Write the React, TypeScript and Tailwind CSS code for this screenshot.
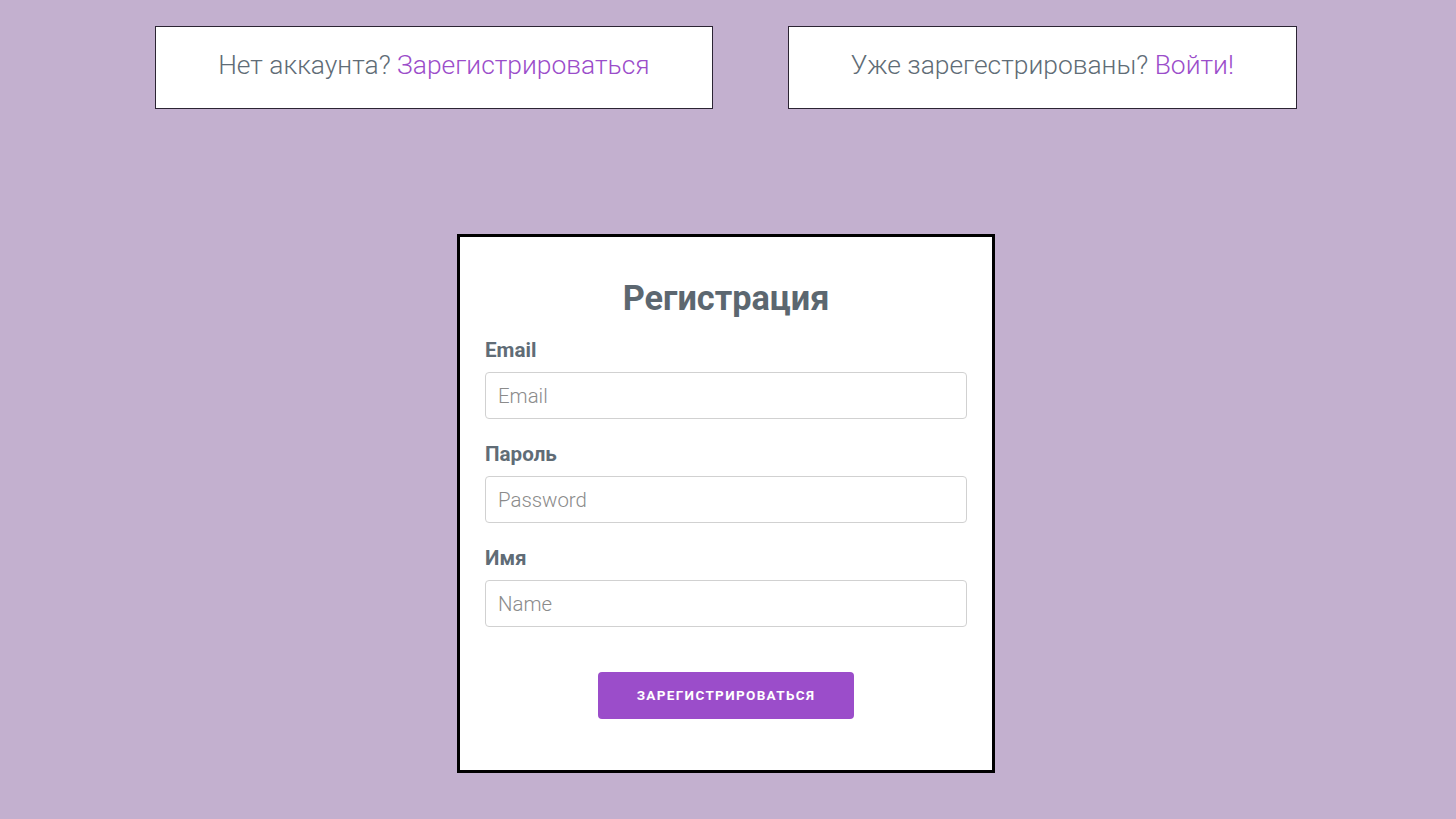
import React from "react";

const Field: React.FC<{ label: string; placeholder: string; type?: string; first?: boolean }> = ({
    label,
    placeholder,
    type = "text",
    first,
}) => {
    return (
        <div className={first ? "" : "mt-[24px]"}>
            <label className="block text-[20.6px] leading-[22px] font-bold text-[#606c76] mb-[11px]">{label}</label>
            <input
                type={type}
                placeholder={placeholder}
                className="block w-full h-[47px] px-[12px] border border-[#d1d1d1] rounded-[4px] bg-white text-[20.4px] font-light text-[#606c76] placeholder:text-[#8b8b8b] outline-none"
            />
        </div>
    );
};

export default function App() {
    return (
        <div
            className="min-h-screen w-full bg-[#c3b0cf] flex flex-col items-center"
            style={{ fontFamily: "Roboto, 'Liberation Sans', sans-serif" }}
        >
            {/* Top switch boxes */}
            <div className="flex justify-center gap-[75px] pt-[26px] pr-[4px]">
                <div className="h-[83px] px-[62px] pb-[4px] flex items-center bg-white border border-[#2b2433]">
                    <p className="text-[26.4px] font-light text-[#606c76] whitespace-nowrap">
                        Нет аккаунта? <span className="text-[#9b4dca]">Зарегистрироваться</span>
                    </p>
                </div>
                <div className="h-[83px] px-[62px] pb-[4px] flex items-center bg-white border border-[#2b2433]">
                    <p className="text-[26.4px] font-light text-[#606c76] whitespace-nowrap">
                        Уже зарегестрированы? <span className="text-[#9b4dca]">Войти!</span>
                    </p>
                </div>
            </div>

            {/* Registration card */}
            <form className="mt-[125px] mr-[4px] w-[538px] bg-white border-[3px] border-black px-[25px] pt-[41px] pb-[51px]">
                <h2 className="text-center text-[34.3px] leading-[40px] font-bold text-[#5c6770] mb-[21px]">Регистрация</h2>
                <Field label="Email" placeholder="Email" type="email" first />
                <Field label="Пароль" placeholder="Password" type="password" />
                <Field label="Имя" placeholder="Name" />
                <div className="flex justify-center mt-[45px]">
                    <button
                        type="button"
                        className="w-[256px] h-[47px] rounded-[4px] bg-[#9b4dca] text-white text-[13.5px] font-bold uppercase tracking-[0.1em]"
                    >
                        Зарегистрироваться
                    </button>
                </div>
            </form>
        </div>
    );
}
